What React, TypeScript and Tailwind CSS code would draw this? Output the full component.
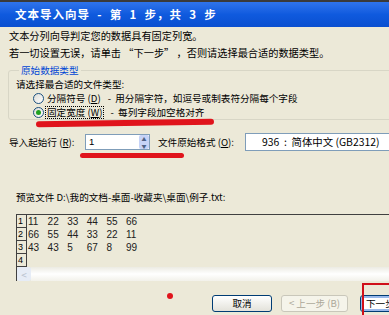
import React from "react";

const CJK = '"Noto Sans CJK SC", "Liberation Sans", sans-serif';

/** 带下划线访问键的小标签，如 (D) */
function Key({ k }: { k: string }) {
  return (
    <span>
      (<span className="underline">{k}</span>)
    </span>
  );
}

function Radio({ checked }: { checked?: boolean }) {
  return (
    <span className="flex h-[11px] w-[11px] items-center justify-center rounded-full border border-[#1c5180] bg-gradient-to-br from-[#dcdcd6] to-white">
      {checked && <span className="h-[5px] w-[5px] rounded-full bg-[#21a121]" />}
    </span>
  );
}

const rows = [
  ["11", "22", "33", "44", "55", "66"],
  ["66", "55", "44", "33", "22", "11"],
  ["43", "43", "5", "67", "8", "99"],
  [],
];

export default function App() {
  return (
    <div
      className="relative h-[315px] w-[389px] overflow-hidden bg-[#ece9d8] text-[9.6px] text-black"
      style={{ fontFamily: CJK }}
    >
      {/* 标题栏 */}
      <div className="h-[2px] bg-[#3a3a3a]" />
      <div className="flex h-[25px] items-center bg-gradient-to-b from-[#2f74ec] via-[#0f5ade] to-[#0a4fd0] pl-[15px] text-[11.5px] font-bold tracking-[1px] text-white">
        <span className="whitespace-pre">文本导入向导  -  第  1  步，共  3  步</span>
      </div>

      <div className="flex">
        <div className="w-[7px] self-stretch bg-[#0a48cf]" />
        <div className="flex h-[288px] flex-1 flex-col">
          <p className="ml-[9px] text-[10.2px] leading-[17px]">
            文本分列向导判定您的数据具有固定列宽。
            <br />
            若一切设置无误，请单击 “下一步” ，否则请选择最合适的数据类型。
          </p>

          {/* 原始数据类型 */}
          <fieldset className="ml-[8px] mt-[3px] rounded-[3px] border border-[#d8d6c6] pl-[7px] pt-[1px]">
            <legend className="ml-[3px] px-[2px] leading-[13px] text-[#0046d5]">原始数据类型</legend>
            <div className="leading-[13px]">请选择最合适的文件类型:</div>
            <div className="flex h-[14px] items-center pl-[17px]">
              <Radio />
              <span className="ml-[2px] px-[1px]">
                分隔符号 <Key k="D" />
              </span>
              <span className="ml-[6px] whitespace-pre">-  用分隔字符，如逗号或制表符分隔每个字段</span>
            </div>
            <div className="flex h-[14px] items-center pl-[17px]">
              <Radio checked />
              <span className="ml-[1px] border border-dotted border-black px-[1px] leading-[11px]">
                固定宽度 <Key k="W" />
              </span>
              <span className="ml-[6px] whitespace-pre">-  每列字段加空格对齐</span>
            </div>
          </fieldset>

          {/* 导入起始行 / 文件原始格式 */}
          <div className="mt-[13px] flex items-center">
            <span className="ml-[9px] w-[76px]">
              导入起始行 <Key k="R" />:
            </span>
            <div className="flex h-[16px] w-[65px] items-center border border-[#7f9db9] bg-white">
              <span className="flex-1 pl-[3px]" style={{ fontFamily: '"Liberation Sans", sans-serif' }}>
                1
              </span>
              <div className="flex h-full w-[10px] flex-col">
                <div className="flex-1 rounded-t-[2px] bg-[#c6d3f7] text-center text-[5px] leading-[7px] text-[#4d6185]">▲</div>
                <div className="flex-1 rounded-b-[2px] bg-[#c6d3f7] text-center text-[5px] leading-[7px] text-[#4d6185]">▼</div>
              </div>
            </div>
            <span className="ml-[8px] w-[87px]">
              文件原始格式 <Key k="O" />:
            </span>
            <div className="flex h-[18px] w-[150px] shrink-0 items-center border border-[#7f9db9] bg-white pl-[16px] text-[10.4px]">
              <span className="whitespace-pre">936  :  简体中文 (GB2312)</span>
            </div>
          </div>

          {/* 预览 */}
          <div className="ml-[16px] mt-[40px] leading-[13px]">
            预览文件 D:\我的文档-桌面-收藏夹\桌面\例子.txt:
          </div>
          <div className="ml-[16px] mt-[10px] flex h-[67px] flex-col border-l border-t border-[#404040]">
            <div className="flex flex-1 flex-col" style={{ fontFamily: '"Liberation Sans", sans-serif' }}>
              {rows.map((r, i) => (
                <div key={i} className="flex h-[13px] shrink-0 items-center text-[10px]">
                  <div className="flex h-[13px] w-[10px] items-end border-b border-r border-[#404040] pl-[1px] text-[9px] leading-[11px]">
                    {i + 1}
                  </div>
                  {r.map((c, j) => (
                    <span key={j} className="w-[19.6px] pl-[1px] text-[#202020]">
                      {c}
                    </span>
                  ))}
                </div>
              ))}
            </div>
            <div className="flex h-[14px] shrink-0">
              <div className="flex w-[14px] items-center justify-center rounded-[2px] bg-[#e6ecf6] text-[10px] text-[#b8c0cc]">&lt;</div>
              <div className="flex-1 bg-gradient-to-b from-[#ecebe3] via-white to-[#f2f1ea]" />
            </div>
          </div>

          {/* 按钮 */}
          <div className="mt-[14px] flex items-center">
            <button className="ml-[212px] flex h-[17px] w-[60px] items-center justify-center rounded-[3px] border border-[#003c74] bg-gradient-to-b from-white to-[#e3e2da]">
              取消
            </button>
            <button className="ml-[9px] flex h-[17px] w-[67px] items-center justify-center rounded-[3px] border border-[#c9c7ba] bg-[#f5f4ea] text-[#aca899]">
              &lt; 上一步 (B)
            </button>
            <button className="ml-[12px] flex h-[17px] w-[70px] items-center whitespace-nowrap rounded-[3px] border border-[#003c74] bg-white pl-[5px] shadow-[inset_0_0_0_2px_#98b8ea]">
              下一步 (N) &gt;
            </button>
          </div>
        </div>
      </div>

      {/* 红色标注 */}
      <div className="absolute left-[36px] top-[120px] h-[6px] w-[178px] -rotate-[0.8deg] rounded-full bg-[#e0141c]" />
      <div className="absolute left-[80px] top-[153px] h-[5px] w-[104px] rounded-full bg-[#e0141c]" />
      <div className="absolute left-[167px] top-[293px] h-[6px] w-[6px] rounded-full bg-[#e0141c]" />
      <div className="absolute left-[362px] top-[283px] h-[40px] w-[40px] border-2 border-[#d0101a]" />
    </div>
  );
}
